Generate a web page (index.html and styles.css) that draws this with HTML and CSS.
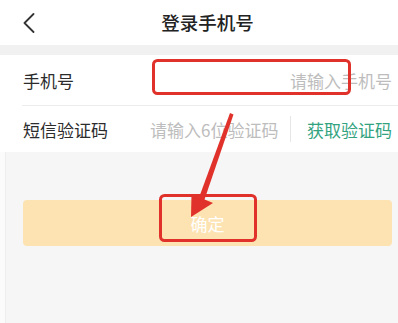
FILE: index.html
```html
<!DOCTYPE html>
<html lang="zh-CN">
<head>
<meta charset="utf-8">
<title>登录手机号</title>
<link rel="stylesheet" href="styles.css">
</head>
<body>
<div class="screen">
  <header class="header">
    <span class="back">
      <svg width="12" height="20" viewBox="0 0 12 20"><polyline points="10.5,1 1.5,10 10.5,19" fill="none" stroke="#333" stroke-width="1.8" stroke-linecap="round" stroke-linejoin="round"/></svg>
    </span>
    <h1 class="title">登录手机号</h1>
    <span></span>
  </header>
  <div class="gap"></div>
  <div class="form">
    <div class="row row-phone">
      <span class="label">手机号</span>
      <span class="placeholder placeholder-right">请输入手机号</span>
    </div>
    <div class="row row-code">
      <span class="label label-fixed">短信验证码</span>
      <span class="placeholder grow">请输入6位验证码</span>
      <span class="vline"></span>
      <span class="getcode">获取验证码</span>
    </div>
  </div>
  <div class="actions">
    <button class="confirm">确定</button>
  </div>
  <svg class="marks" width="398" height="323" viewBox="0 0 398 323">
    <rect x="153.5" y="60.5" width="196" height="33" rx="4" fill="none" stroke="#e0322b" stroke-width="3"/>
    <rect x="160.5" y="195.5" width="95" height="45" rx="4" fill="none" stroke="#e0322b" stroke-width="3"/>
    <polygon points="230,113 233.5,114.5 204,201 198.5,199" fill="#e0322b"/>
    <polygon points="191,217 191.5,194 213,203" fill="#e0322b"/>
  </svg>
</div>
</body>
</html>
```

FILE: styles.css
```css
html, body {
  margin: 0;
  padding: 0;
  background: #fafafa;
}
body {
  font-family: "Noto Sans CJK SC", "Noto Sans", sans-serif;
  width: 398px;
  height: 323px;
  overflow: hidden;
}
.screen {
  position: relative;
  width: 398px;
  height: 323px;
  background: #f6f6f7;
  box-shadow: inset 5px 0 0 #fbfbfb, inset 6px 0 0 #eeeeee;
  display: flex;
  flex-direction: column;
}
.header {
  height: 45px;
  background: #ffffff;
  display: grid;
  grid-template-columns: 1fr auto 1fr;
  align-items: center;
  padding-left: 17px;
  box-sizing: border-box;
}
.back {
  display: flex;
  align-items: center;
  margin-left: 6px;
  margin-top: 1px;
}
.title {
  margin: 0;
  font-size: 18.5px;
  font-weight: 500;
  color: #222;
  line-height: 1;
}
.gap {
  height: 10px;
  background: #f1f1f2;
}
.form {
  background: #ffffff;
  padding-left: 22px;
}
.row {
  display: flex;
  align-items: center;
  padding-right: 6px;
  font-size: 17px;
}
.row-phone {
  height: 50px;
  border-bottom: 1px solid #ececec;
}
.row-code {
  height: 46px;
}
.label {
  color: #2c2c2c;
  padding-left: 1px;
}
.label-fixed {
  width: 127px;
}
.placeholder {
  color: #bdbdbd;
}
.placeholder-right {
  margin-left: auto;
}
.grow {
  flex: 1;
}
.vline {
  width: 1px;
  height: 26px;
  background: #e6e6e6;
  margin-right: 16px;
}
.getcode {
  color: #33a37f;
}
.actions {
  padding: 48px 6px 0 23px;
}
.confirm {
  display: block;
  width: 100%;
  height: 46px;
  border: none;
  border-radius: 4px;
  background: #fde3b2;
  color: #ffffff;
  font-family: inherit;
  font-size: 17px;
  padding: 0;
}
.marks {
  position: absolute;
  left: 0;
  top: 0;
  pointer-events: none;
}
```
